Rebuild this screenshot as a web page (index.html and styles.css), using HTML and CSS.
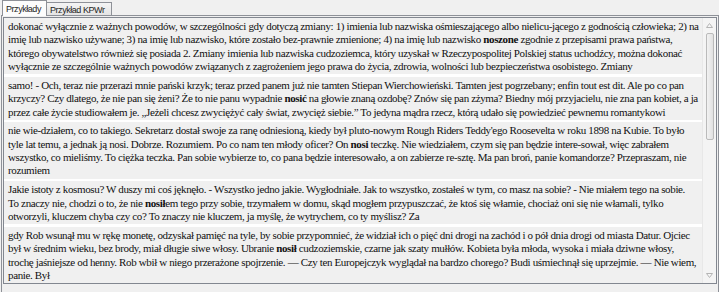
FILE: index.html
```html
<!DOCTYPE html>
<html lang="pl">
<head>
<meta charset="utf-8">
<title>Przykłady</title>
<link rel="stylesheet" href="styles.css">
</head>
<body>
<div class="tabs">
  <div class="tab active">Przykłady</div>
  <div class="tab inactive">Przykład KPWr</div>
</div>
<div class="pane">
  <div class="list">
    <div class="items">
      <div class="item">dokonać wyłącznie z ważnych powodów, w szczególności gdy dotyczą zmiany: 1) imienia lub nazwiska ośmieszającego albo nielicu-jącego z godnością człowieka; 2) na<br>imię lub nazwisko używane; 3) na imię lub nazwisko, które zostało bez-prawnie zmienione; 4) na imię lub nazwisko <b>noszone</b> zgodnie z przepisami prawa państwa,<br>którego obywatelstwo również się posiada 2. Zmiany imienia lub nazwiska cudzoziemca, który uzyskał w Rzeczypospolitej Polskiej status uchodźcy, można dokonać<br>wyłącznie ze szczególnie ważnych powodów związanych z zagrożeniem jego prawa do życia, zdrowia, wolności lub bezpieczeństwa osobistego. Zmiany</div>
      <div class="item">samo! - Och, teraz nie przerazi mnie pański krzyk; teraz przed panem już nie tamten Stiepan Wierchowieński. Tamten jest pogrzebany; enfin tout est dit. Ale po co pan<br>krzyczy? Czy dlatego, że nie pan się żeni? Że to nie panu wypadnie <b>nosić</b> na głowie znaną ozdobę? Znów się pan zżyma? Biedny mój przyjacielu, nie zna pan kobiet, a ja<br>przez całe życie studiowałem je. „Jeżeli chcesz zwyciężyć cały świat, zwycięż siebie.” To jedyna mądra rzecz, którą udało się powiedzieć pewnemu romantykowi</div>
      <div class="item">nie wie-działem, co to takiego. Sekretarz dostał swoje za ranę odniesioną, kiedy był pluto-nowym Rough Riders Teddy'ego Roosevelta w roku 1898 na Kubie. To było<br>tyle lat temu, a jednak ją nosi. Dobrze. Rozumiem. Po co nam ten młody oficer? On <b>nosi</b> teczkę. Nie wiedziałem, czym się pan będzie intere-sował, więc zabrałem<br>wszystko, co mieliśmy. To ciężka teczka. Pan sobie wybierze to, co pana będzie interesowało, a on zabierze re-sztę. Ma pan broń, panie komandorze? Przepraszam, nie<br>rozumiem</div>
      <div class="item">Jakie istoty z kosmosu? W duszy mi coś jęknęło. - Wszystko jedno jakie. Wygłodniałe. Jak to wszystko, zostałeś w tym, co masz na sobie? - Nie miałem tego na sobie.<br>To znaczy nie, chodzi o to, że nie <b>nosił</b>em tego przy sobie, trzymałem w domu, skąd mogłem przypuszczać, że ktoś się włamie, chociaż oni się nie włamali, tylko<br>otworzyli, kluczem chyba czy co? To znaczy nie kluczem, ja myślę, że wytrychem, co ty myślisz? Za</div>
      <div class="item">gdy Rob wsunął mu w rękę monetę, odzyskał pamięć na tyle, by sobie przypomnieć, że widział ich o pięć dni drogi na zachód i o pół dnia drogi od miasta Datur. Ojciec<br>był w średnim wieku, bez brody, miał długie siwe włosy. Ubranie <b>nosił</b> cudzoziemskie, czarne jak szaty mułłów. Kobieta była młoda, wysoka i miała dziwne włosy,<br>trochę jaśniejsze od henny. Rob wbił w niego przerażone spojrzenie. — Czy ten Europejczyk wyglądał na bardzo chorego? Budi uśmiechnął się uprzejmie. — Nie wiem,<br>panie. Był</div>
    </div>
    <div class="scrollbar">
      <div class="sb-btn">
        <svg width="7" height="5" viewBox="0 0 7 5"><polygon points="0.5,4.5 3.5,0.5 6.5,4.5" fill="#f6f6f6" stroke="#b4b4b4" stroke-width="1"/></svg>
      </div>
      <div class="track"><div class="thumb"></div></div>
      <div class="sb-btn">
        <svg width="7" height="5" viewBox="0 0 7 5"><polygon points="0.5,0.5 3.5,4.5 6.5,0.5" fill="#f6f6f6" stroke="#b4b4b4" stroke-width="1"/></svg>
      </div>
    </div>
  </div>
</div>
</body>
</html>
```
FILE: styles.css
```css
html, body {
  margin: 0;
  padding: 0;
}
body {
  width: 719px;
  height: 292px;
  overflow: hidden;
  background: #f0f0f0;
  font-family: "Liberation Serif", "Times New Roman", serif;
}
.tabs {
  display: flex;
  align-items: flex-end;
  height: 15px;
  padding-left: 2px;
}
.tab {
  box-sizing: border-box;
  display: flex;
  align-items: center;
  font-family: "Liberation Sans", Arial, sans-serif;
  font-size: 9px;
  letter-spacing: -0.45px;
  color: #1e1e1e;
  border: 1px solid #8e9198;
  border-bottom: none;
  white-space: nowrap;
}
.tab.active {
  width: 45px;
  height: 16px;
  margin-bottom: -1px;
  padding-left: 3px;
  background: #fcfcfc;
  position: relative;
  z-index: 1;
}
.tab.inactive {
  width: 65px;
  height: 13px;
  padding-left: 3px;
  padding-top: 1px;
  border-left: none;
  background: linear-gradient(#f4f4f4, #e4e4e4);
}
.pane {
  box-sizing: border-box;
  margin-left: 1px;
  width: 718px;
  height: 290px;
  border: 1px solid #8e9198;
  padding: 1px 1px 0 1px;
  background: #f0f0f0;
}
.list {
  box-sizing: border-box;
  display: flex;
  height: 267px;
  border: 1px solid #828790;
  background: #ffffff;
}
.items {
  flex: 1;
  overflow: hidden;
}
.item {
  background: #f0f0f0;
  padding: 2px 4px 1px;
  margin-bottom: 2.6px;
  font-size: 11px;
  line-height: 13.33px;
  letter-spacing: -0.36px;
  white-space: nowrap;
  color: #111111;
}
.item b {
  font-weight: bold;
}
.scrollbar {
  width: 13px;
  display: flex;
  flex-direction: column;
  align-items: center;
  background: #f4f4f4;
  border-left: 1px solid #e8e8e8;
}
.sb-btn {
  height: 15px;
  width: 100%;
  display: flex;
  align-items: center;
  justify-content: center;
}
.track {
  flex: 1;
  width: 100%;
  display: flex;
  justify-content: center;
}
.thumb {
  box-sizing: border-box;
  width: 8px;
  height: 107px;
  margin-top: 0px;
  border: 1px solid #bababa;
  border-radius: 2px;
  background: linear-gradient(to right, #f2f2f2, #e1e1e1);
}
```
